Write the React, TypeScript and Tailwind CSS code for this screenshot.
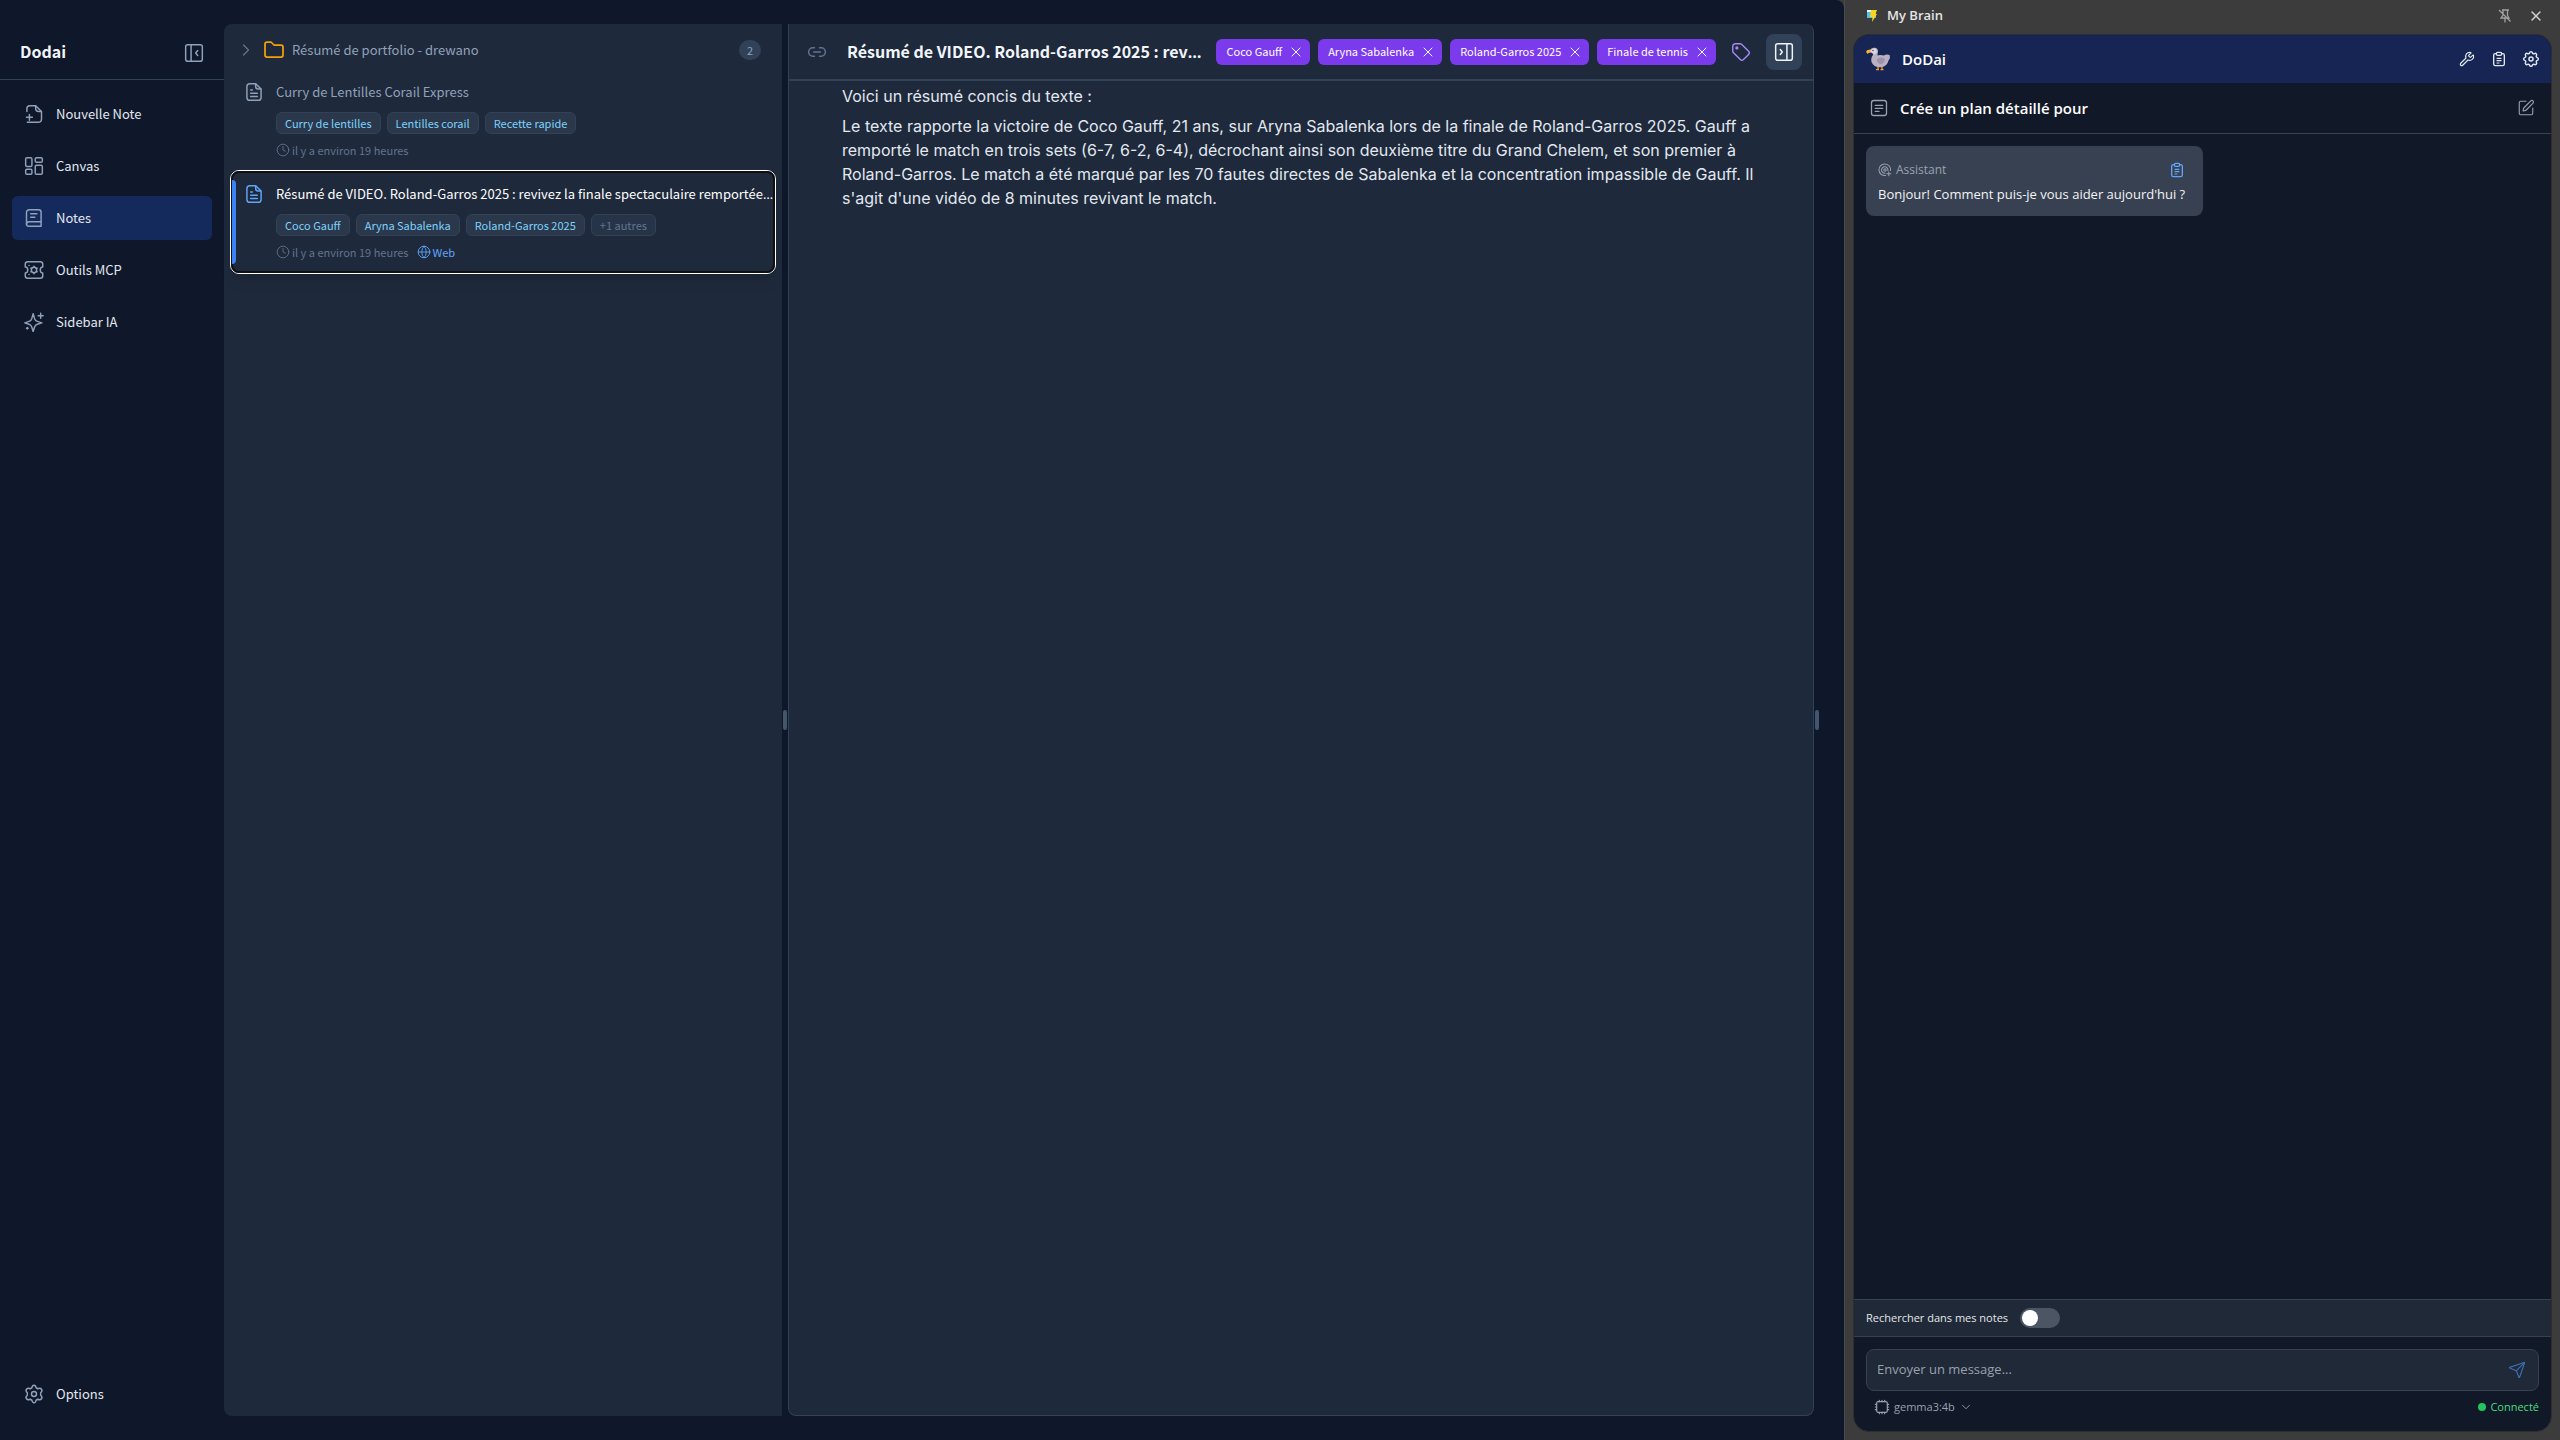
import React from 'react';
import { TbFolder, TbTag } from 'react-icons/tb';
import { ChevronRight, ChevronDown, Clock, Globe, X, Link2, Send, SquarePen, Wrench } from 'lucide-react';

function Icon({ className = '', children, sw = 1.75, box = '0 0 24 24' }: { className?: string; children: React.ReactNode; sw?: number; box?: string }) {
  return (
    <svg viewBox={box} fill="none" stroke="currentColor" strokeWidth={sw} strokeLinecap="round" strokeLinejoin="round" className={className} aria-hidden="true">
      {children}
    </svg>
  );
}

const NoteAdd = ({ className = '' }) => (
  <Icon className={className}>
    <path d="M3.500 9V5.500Q3.500 2 7 2H14L21 9V18Q21 22 17 22H4" />
    <path d="M14 2.500V5.500Q14 9 17.500 9H20.500" />
    <path d="M6.500 12.500V19.500M3 16H10" />
  </Icon>
);
const Dashboard = ({ className = '' }) => (
  <Icon className={className}>
    <rect x="2" y="2" width="7.500" height="10.500" rx="1.500" />
    <rect x="13.500" y="2" width="8.500" height="5.500" rx="1.500" />
    <rect x="2" y="16" width="7.500" height="6" rx="1.500" />
    <rect x="13.500" y="11" width="8.500" height="11" rx="1.500" />
  </Icon>
);
const Notebook = ({ className = '' }) => (
  <Icon className={className}>
    <path d="M20.500 16.500V5Q20.500 2 17.500 2H6.500Q3 2 3 5.500V19.500" />
    <path d="M20.500 16.500H6Q3 16.500 3 19.300Q3 22 6 22H20.500V16.500" />
    <path d="M8 7H15.500M8 11H13" />
  </Icon>
);
const ToolCard = ({ className = '' }) => (
  <Icon className={className}>
    <path d="M1.500 8.500V5Q1.500 2 4.500 2H19.500Q22.500 2 22.500 5V8.500Q19.500 8.500 19.500 12T22.500 15.500V19Q22.500 22 19.500 22H4.500Q1.500 22 1.500 19V15.500Q4.500 15.500 4.500 12T1.500 8.500Z" />
    <circle cx="12" cy="12" r="3.200" />
    <path d="M12 7.500V8.700M12 15.300V16.500M8.200 9.800L9.200 10.400M14.800 13.600L15.800 14.200M8.200 14.200L9.200 13.600M14.800 10.400L15.800 9.800M6 6.500H6.100M6 17.500H6.100" />
  </Icon>
);
const Sparkle = ({ className = '' }) => (
  <Icon className={className}>
    <path d="M11 2L12.700 8Q13.500 10.500 16 11.300L21.500 13L16 14.700Q13.500 15.500 12.700 18L11 23.500L9.300 18Q8.500 15.500 6 14.700L1 13L6 11.300Q8.500 10.500 9.300 8Z" />
    <path d="M20 1.500V7.500M17 4.500H23M4 18.500V20.500M3 19.500H5" />
  </Icon>
);
const Gear = ({ className = '' }) => (
  <Icon className={className}>
    <path d="M9.500 4.500Q10 1.500 12 1.500T14.500 4.500L16.500 5.700Q19.500 4 21 6.300Q22.500 8.500 20 10.500V13.500Q22.500 15.500 21 17.700Q19.500 20 16.500 18.300L14.500 19.500Q14 22.500 12 22.500T9.500 19.500L7.500 18.300Q4.500 20 3 17.700Q1.500 15.500 4 13.500V10.500Q1.500 8.500 3 6.300Q4.500 4 7.500 5.700Z" />
    <circle cx="12" cy="12" r="3" />
  </Icon>
);
const RoundGear = ({ className = '' }) => (
  <Icon className={className} sw={1.8} box="1 1 22 22">
    <path d="M10.325 4.317c.426-1.756 2.924-1.756 3.350 0a1.724 1.724 0 0 0 2.573 1.066c1.543-.940 3.310.826 2.370 2.370a1.724 1.724 0 0 0 1.065 2.572c1.756.426 1.756 2.924 0 3.350a1.724 1.724 0 0 0-1.066 2.573c.940 1.543-.826 3.310-2.370 2.370a1.724 1.724 0 0 0-2.572 1.065c-.426 1.756-2.924 1.756-3.350 0a1.724 1.724 0 0 0-2.573-1.066c-1.543.940-3.310-.826-2.370-2.370a1.724 1.724 0 0 0-1.065-2.572c-1.756-.426-1.756-2.924 0-3.350a1.724 1.724 0 0 0 1.066-2.573c-.940-1.543.826-3.310 2.370-2.370 1 .608 2.296.070 2.572-1.065" />
    <circle cx="12" cy="12" r="2.500" />
  </Icon>
);
const SidePanel = ({ className = '', right = false }) => (
  <Icon className={className}>
    <g transform={right ? 'matrix(-1 0 0 1 24 0)' : undefined}>
      <rect x="2" y="2" width="20" height="20" rx="2.500" />
      <path d="M8.500 2V22M16.500 9L14 12L16.500 15" />
    </g>
  </Icon>
);
const DocText = ({ className = '' }) => (
  <Icon className={className}>
    <path d="M14 2H7Q3.500 2 3.500 5.500V18.500Q3.500 22 7 22H17Q20.500 22 20.500 18.500V8.500Z" />
    <path d="M14 2.500V5.500Q14 8.500 17 8.500H20" />
    <path d="M8 17.500H16M8 13.500H16M8 9.500H10" />
  </Icon>
);
const NoteLines = ({ className = '' }) => (
  <Icon className={className}>
    <rect x="2" y="2" width="20" height="20" rx="3" />
    <path d="M7 8.500H17M7 12.500H17M7 16.500H12" />
  </Icon>
);
const Clipboard = ({ className = '' }) => (
  <Icon className={className} sw={2}>
    <path d="M8 4H6.500Q4 4 4 6.500V19.500Q4 22 6.500 22H17.500Q20 22 20 19.500V6.500Q20 4 17.500 4H16" />
    <rect x="8" y="2" width="8" height="4.500" rx="2" />
    <path d="M9 11H15M9 14.500H15M9 18H12" strokeWidth="1.800" />
  </Icon>
);
const Assistant = ({ className = '' }) => (
  <Icon className={className}>
    <path d="M21.500 13A10 10 0 1 0 13 21.500" />
    <path d="M17 13A5.500 5.500 0 1 0 12 17.500" />
    <circle cx="12" cy="12" r="2" />
    <path d="M18.500 15V22M15 18.500H22" />
  </Icon>
);
const Chip = ({ className = '' }) => (
  <Icon className={className}>
    <rect x="4" y="4" width="16" height="16" rx="2.500" />
    <path d="M8 2V4M12 2V4M16 2V4M8 20V22M12 20V22M16 20V22M2 8H4M2 12H4M2 16H4M20 8H22M20 12H22M20 16H22" />
  </Icon>
);
const Dodo = ({ className = '' }) => (
  <svg viewBox="0 0 24 24" className={className} aria-hidden="true">
    <path d="M12 19V22.500M16 19V22.500" stroke="#f08a24" strokeWidth="1.500" />
    <path d="M10 22.700H13M14.500 22.700H17.500" stroke="#f59e2b" strokeWidth="1.200" />
    <path d="M4 3.500Q5 .500 8.500 .700Q12 1 12 4.500Q11.500 7 11.500 8.500Q14 7.500 18 8.500Q21 6.500 24 8.500Q23.500 10 24 11Q23 12.500 22.500 13.500Q21.500 19 15 20.300Q7.500 20.500 5.500 15Q4.500 11 7 8Q7.500 6.500 4 5Z" fill="#b9b1c2" />
    <path d="M4.500 3.500Q6 1 9 1.500Q11.500 2.500 10.500 6L8 7.500Q7.500 5.500 4 5Z" fill="#dcd6e0" />
    <path d="M4.500 2.500Q1 2.500 .300 4Q0 5.500 1.500 7Q2 5.800 4.800 5.500Z" fill="#f9b52f" />
    <circle cx="7" cy="3.500" r=".700" fill="#3b3344" />
    <path d="M11 12Q15 9 19 12Q18 17.500 14 17Q10.500 16 11 12Z" fill="#9f93ab" />
  </svg>
);
const BrainLogo = ({ className = '' }) => (
  <svg viewBox="0 0 12 14" className={className} aria-hidden="true">
    <path d="M1 1H10V9H1Z" fill="#4fc3ea" />
    <path d="M1 1H10V3H1Z" fill="#e9f6fb" />
    <path d="M5 1H11L9.500 5H11L6 13L6.500 8H4Z" fill="#fcd21c" />
  </svg>
);
const PinOff = ({ className = '' }) => (
  <svg viewBox="0 0 14 14" fill="none" stroke="currentColor" strokeWidth="1.300" className={className} aria-hidden="true">
    <path d="M4 1H11M5 1V6L3 9H11L9.500 6.500V1M7 9V13.500M1 1L12.500 12.500" />
  </svg>
);

const nav = [
  { label: 'Nouvelle Note', icon: NoteAdd },
  { label: 'Canvas', icon: Dashboard },
  { label: 'Notes', icon: Notebook, active: true },
  { label: 'Outils MCP', icon: ToolCard },
  { label: 'Sidebar IA', icon: Sparkle },
];

function NavItem({ label, icon: I, active }: { label: string; icon: React.ComponentType<{ className?: string }>; active?: boolean }) {
  return (
    <button className={`flex h-11 w-full items-center gap-3 rounded-md px-3 text-left text-[13px] text-slate-200 ${active ? 'bg-[#152a5c]' : ''}`}>
      <I className="size-5 text-slate-400" />
      {label}
    </button>
  );
}

function Title({ text, cut }: { text: string; cut?: boolean }) {
  return (
    <>
      <span className="font-['Noto_Sans_CJK_SC',sans-serif]">{text}</span>
      {cut && '…'}
    </>
  );
}

function NoteItem({ title, cut, tags, more, web, active }: { title: string; cut?: boolean; tags: string[]; more?: string; web?: boolean; active?: boolean }) {
  return (
    <article
      tabIndex={0}
      className={`relative flex gap-3 rounded-lg border border-transparent py-3 pl-3 ${active ? 'shadow-lg outline outline-white' : ''}`}
    >
      {active && <span className="pointer-events-none absolute -inset-px rounded-lg border-2 border-[#101010]" />}
      {active && <span className="absolute inset-y-2 left-0 w-1 rounded-r bg-[#3b82f6]" />}
      <DocText className={`size-5 shrink-0 ${active ? 'text-[#60a5fa]' : 'text-slate-400'}`} />
      <div className="min-w-0 flex-1">
        <h3 className={`font-['Open_Sans',sans-serif] text-[13px] leading-5 whitespace-nowrap ${active ? 'text-white' : 'text-slate-400'}`}><Title text={title} cut={cut} /></h3>
        <div className="mt-2.5 flex gap-1.5">
          {tags.map((t) => (
            <span key={t} className="h-[22px] rounded-md border border-slate-700 bg-[#2b384c] px-2 text-[11px] leading-5 text-[#7dd3fc]">{t}</span>
          ))}
          {more && <span className="h-[22px] rounded-md border border-slate-700 bg-[#273447] px-2 text-[11px] leading-5 text-slate-500">{more}</span>}
        </div>
        <p className="mt-2 flex items-center gap-2 text-[11px] leading-4 text-slate-500">
          <span className="flex items-center gap-0.5"><Clock className="size-3.5" strokeWidth={1.5} />il y a environ 19 heures</span>
          {web && <a href="#web" className="flex items-center gap-0.5 text-[#60a5fa]"><Globe className="size-3.5" strokeWidth={1.5} />Web</a>}
        </p>
      </div>
    </article>
  );
}

function Grip() {
  return <div className="flex w-1.5 shrink-0 items-center justify-center"><span className="h-5 w-1 rounded-sm bg-slate-600" /></div>;
}

export default function App() {
  return (
    <div className="flex h-screen overflow-hidden bg-[#3c3c3c]">
      <div className="flex min-w-0 flex-1 rounded-tr-lg bg-[#0f172a] font-['Noto_Sans_CJK_SC','Noto_Sans',sans-serif]">
        <aside className="flex w-56 shrink-0 flex-col">
          <header className="flex h-20 items-end justify-between border-b border-slate-700 px-5 pb-3.5">
            <h1 className="text-base leading-7 font-bold text-slate-100">Dodai</h1>
            <button aria-label="Réduire le menu" className="mb-0.5 text-slate-400"><SidePanel className="size-5" /></button>
          </header>
          <nav className="flex flex-1 flex-col gap-2 p-3">
            {nav.map((n) => <NavItem key={n.label} {...n} />)}
          </nav>
          <div className="px-3 py-6"><NavItem label="Options" icon={Gear} /></div>
        </aside>

        <main className="flex min-w-0 flex-1 py-6 pr-6">
          <section className="flex w-[558px] shrink-0 flex-col rounded-l-lg bg-[#1e293b] px-[7px] py-[5px]">
            <div className="flex h-10 items-center gap-1.5 pt-0.5 pr-3.5 pl-[5px] text-slate-400">
              <ChevronRight className="size-5 text-slate-500" strokeWidth={1.5} />
              <TbFolder className="size-6 text-[#f59e0b]" strokeWidth={1.75} />
              <span className="flex-1 text-[13px]">Résumé de portfolio - drewano</span>
              <span className="rounded-full bg-slate-700 px-2 text-[11px] leading-5">2</span>
            </div>
            <NoteItem title="Curry de Lentilles Corail Express" tags={['Curry de lentilles', 'Lentilles corail', 'Recette rapide']} />
            <NoteItem active web cut title="Résumé de VIDEO. Roland-Garros 2025 : revivez la finale spectaculaire remportée" tags={['Coco Gauff', 'Aryna Sabalenka', 'Roland-Garros 2025']} more="+1 autres" />
          </section>
          <Grip />
          <section className="flex min-w-0 flex-1 flex-col rounded-r-lg rounded-bl-lg border-x border-b border-slate-700 bg-[#1e293b]">
            <header className="flex h-[57px] shrink-0 items-center border-b-2 border-slate-700 pr-[11px] pl-[18px]">
              <button aria-label="Lien" className="mr-5 text-slate-500"><Link2 className="size-5" strokeWidth={1.75} /></button>
              <h2 className="min-w-0 flex-1 truncate font-['Open_Sans',sans-serif] text-base font-bold text-slate-100"><Title text="Résumé de VIDEO. Roland-Garros 2025 : rev" cut /></h2>
              <div className="ml-2 flex gap-2">
                {['Coco Gauff', 'Aryna Sabalenka', 'Roland-Garros 2025', 'Finale de tennis'].map((t) => (
                  <span key={t} className="flex h-[26px] items-center gap-1.5 rounded-md bg-[#7c3aed] pr-1.5 pl-2.5 text-[11px] text-white">
                    {t}
                    <button aria-label={`Retirer ${t}`}><X className="size-4" strokeWidth={1.5} /></button>
                  </span>
                ))}
              </div>
              <button aria-label="Étiquettes" className="ml-3.5 text-[#a78bfa]"><TbTag className="size-[22px]" strokeWidth={1.5} /></button>
              <button aria-label="Panneau" className="ml-3.5 grid size-9 place-items-center rounded-lg bg-slate-700 text-slate-100"><SidePanel right className="size-5" /></button>
            </header>
            <div className="px-[53px] pt-[3px] font-['Inter',sans-serif] text-base leading-6 text-slate-200">
              <p>Voici un résumé concis du texte :</p>
              <p className="mt-1.5">Le texte rapporte la victoire de Coco Gauff, 21 ans, sur Aryna Sabalenka lors de la finale de Roland-Garros 2025. Gauff a remporté le match en trois sets (6-7, 6-2, 6-4), décrochant ainsi son deuxième titre du Grand Chelem, et son premier à Roland-Garros. Le match a été marqué par les 70 fautes directes de Sabalenka et la concentration impassible de Gauff. Il s'agit d'une vidéo de 8 minutes revivant le match.</p>
            </div>
          </section>
          <Grip />
        </main>
      </div>

      <aside className="flex w-[716px] shrink-0 flex-col border-l border-[#4a4a4a] px-2 pb-2 font-['Open_Sans','Noto_Sans',sans-serif]">
        <header className="flex h-[34px] shrink-0 items-center pr-2 pb-0.5 pl-3 text-neutral-200">
          <BrainLogo className="mr-2 size-3.5" />
          <span className="flex-1 text-[13px] font-semibold">My Brain</span>
          <button aria-label="Désépingler" className="text-neutral-400"><PinOff className="size-3.5" /></button>
          <button aria-label="Fermer" className="ml-4 text-neutral-300"><X className="size-4" /></button>
        </header>
        <div className="flex flex-1 flex-col overflow-hidden rounded-2xl border border-[#2e2e2e] bg-[#111827]">
          <header className="flex h-12 shrink-0 items-center bg-[#172554] pr-[11px] pl-3 text-white">
            <Dodo className="mr-3 size-6" />
            <h2 className="flex-1 text-[15px] font-semibold">DoDai</h2>
            <div className="flex items-center gap-3.5 text-slate-200">
              <button aria-label="Outils" className="grid size-[18px] place-items-center"><Wrench className="size-4" strokeWidth={1.75} /></button>
              <button aria-label="Notes" className="grid size-[18px] place-items-center"><Clipboard className="size-4" /></button>
              <button aria-label="Réglages"><RoundGear className="size-[18px]" /></button>
            </div>
          </header>
          <div className="flex h-[51px] shrink-0 items-center border-b border-[#374151] px-4 text-gray-400">
            <NoteLines className="mr-3 size-[18px]" />
            <h3 className="flex-1 text-[15px] font-semibold text-white">Crée un plan détaillé pour</h3>
            <button aria-label="Renommer"><SquarePen className="size-[18px]" strokeWidth={1.5} /></button>
          </div>
          <div className="flex-1 p-3">
            <div className="inline-flex h-[70px] flex-col rounded-lg bg-[#374151] pt-4 pr-[18px] pl-3 text-gray-100">
              <div className="flex items-center gap-1 text-xs text-gray-400">
                <Assistant className="size-3.5" />
                <span className="flex-1">Assistant</span>
                <button aria-label="Copier" className="text-[#60a5fa]"><Clipboard className="size-4" /></button>
              </div>
              <p className="mt-1.5 text-[13px] leading-5">Bonjour! Comment puis-je vous aider aujourd'hui ?</p>
            </div>
          </div>
          <label className="flex h-[38px] shrink-0 items-center gap-3 border-y border-[#374151] bg-[#1f2937] px-3 text-[11px] text-gray-200">
            Rechercher dans mes notes
            <input type="checkbox" role="switch" className="peer sr-only" />
            <span className="h-5 w-10 rounded-full bg-[#4b5563] p-0.5 peer-checked:bg-blue-600"><span className="block size-4 rounded-full bg-white" /></span>
          </label>
          <div className="px-3 pt-3 pb-4">
            <div className="flex h-[42px] items-center rounded-lg border border-[#374151] bg-[#1f2937] pr-3 pl-2.5">
              <input aria-label="Message" placeholder="Envoyer un message..." className="min-w-0 flex-1 bg-transparent text-[13px] outline-none placeholder:text-gray-400" />
              <button aria-label="Envoyer" className="text-[#3b6fb5]"><Send className="size-[18px]" strokeWidth={1.5} /></button>
            </div>
            <div className="mt-2 flex h-4 items-center justify-between pl-2 text-[11px]">
              <button className="flex items-center gap-1 text-gray-400"><Chip className="size-4" />gemma3:4b<ChevronDown className="size-3.5" strokeWidth={1.5} /></button>
              <span className="flex items-center gap-1 text-[#4ade80]"><span className="size-2 rounded-full bg-[#22c55e]" />Connecté</span>
            </div>
          </div>
        </div>
      </aside>
    </div>
  );
}
